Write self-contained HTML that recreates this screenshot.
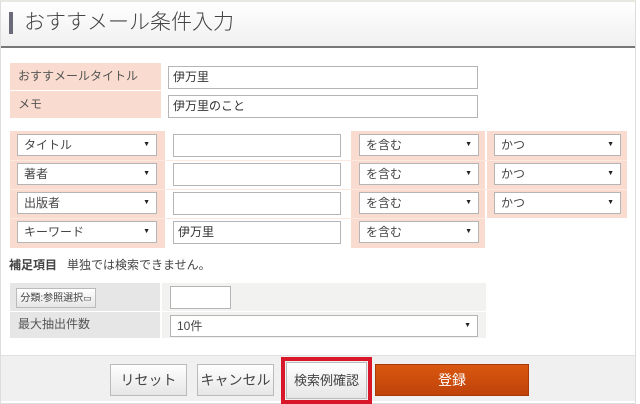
<!DOCTYPE html>
<html><head><meta charset="utf-8">
<style>
*{box-sizing:border-box;margin:0;padding:0}
body{width:640px;height:404px;overflow:hidden;background:#fff;font-family:"Liberation Sans","Noto Sans CJK JP",sans-serif;color:#333;position:relative}
.a{position:absolute}
.frame{left:0;top:0;width:636px;height:404px;border:1px solid #ddd;border-top:2px solid #e8e8e0;background:#fff}
.hdr{left:1px;top:2px;width:634px;height:46px;background:linear-gradient(#fff,#f0f0f0);border-bottom:2px solid #777}
.bar{left:9px;top:12px;width:4px;height:22px;background:#6a6a7a}
.ttl{left:24px;top:9px;font-size:21px;color:#444;line-height:28px;font-weight:300}
.pk{background:#f9dccf}
.lbl{font-size:12px;color:#555;line-height:27px;padding-left:8px}
.in{background:#fff;border:1px solid #b5b5b5;font-size:12px;line-height:20px;padding-left:4px;color:#333}
.sel{background:#fff;border:1px solid #b5b5b5;font-size:12px;line-height:20px;padding-left:6px;color:#444}
.sel:after{content:"▼";position:absolute;right:6px;top:0;font-size:7px;color:#222}
.gy{background:#e6e6e6}
.gv{background:#f2f2f0}
.btn{border:1px solid #bbb;background:linear-gradient(#fff,#e6e6e6);font-size:14px;text-align:center;line-height:30px;color:#444}
</style></head><body>
<div class="a frame"></div>
<div class="a hdr"></div>
<div class="a bar"></div>
<div class="a ttl">おすすメール条件入力</div>

<div class="a pk" style="left:10px;top:63px;width:151px;height:27px"></div>
<div class="a pk" style="left:10px;top:91px;width:151px;height:27px"></div>
<div class="a lbl" style="left:10px;top:63px">おすすメールタイトル</div>
<div class="a lbl" style="left:10px;top:91px">メモ</div>
<div class="a in" style="left:168px;top:66px;width:310px;height:23px">伊万里</div>
<div class="a in" style="left:168px;top:95px;width:310px;height:23px">伊万里のこと</div>

<div class="a pk" style="left:10px;top:131px;width:155px;height:117px"></div>
<div class="a pk" style="left:351px;top:131px;width:134px;height:117px"></div>
<div class="a pk" style="left:487px;top:131px;width:140px;height:87px"></div>
<div class="a" style="left:10px;top:160px;width:617px;height:1px;background:#fbe9e0"></div>
<div class="a" style="left:10px;top:189px;width:617px;height:1px;background:#fbe9e0"></div>
<div class="a" style="left:10px;top:218px;width:475px;height:1px;background:#fbe9e0"></div>

<div class="a sel" style="left:17px;top:134px;width:140px;height:22px">タイトル</div>
<div class="a sel" style="left:17px;top:163px;width:140px;height:22px">著者</div>
<div class="a sel" style="left:17px;top:192px;width:140px;height:22px">出版者</div>
<div class="a sel" style="left:17px;top:221px;width:140px;height:22px">キーワード</div>

<div class="a in" style="left:173px;top:134px;width:168px;height:23px"></div>
<div class="a in" style="left:173px;top:163px;width:168px;height:23px"></div>
<div class="a in" style="left:173px;top:192px;width:168px;height:23px"></div>
<div class="a in" style="left:173px;top:221px;width:168px;height:23px">伊万里</div>

<div class="a sel" style="left:359px;top:134px;width:120px;height:22px">を含む</div>
<div class="a sel" style="left:359px;top:163px;width:120px;height:22px">を含む</div>
<div class="a sel" style="left:359px;top:192px;width:120px;height:22px">を含む</div>
<div class="a sel" style="left:359px;top:221px;width:120px;height:22px">を含む</div>

<div class="a sel" style="left:494px;top:134px;width:127px;height:22px">かつ</div>
<div class="a sel" style="left:494px;top:163px;width:127px;height:22px">かつ</div>
<div class="a sel" style="left:494px;top:192px;width:127px;height:22px">かつ</div>

<div class="a" style="left:9px;top:257px;font-size:12px;line-height:16px;color:#444"><b style="font-weight:bold">補足項目</b>&nbsp;&nbsp;&nbsp;単独では検索できません。</div>

<div class="a gy" style="left:10px;top:283px;width:150px;height:55px"></div>
<div class="a gv" style="left:162px;top:283px;width:324px;height:55px"></div>
<div class="a" style="left:10px;top:311px;width:476px;height:1px;background:#fff"></div>
<div class="a btn" style="left:16px;top:288px;width:80px;height:20px;font-size:10px;line-height:18px">分類:参照選択<span style="font-size:9px">▭</span></div>
<div class="a in" style="left:170px;top:286px;width:61px;height:23px"></div>
<div class="a lbl" style="left:10px;top:311px">最大抽出件数</div>
<div class="a sel" style="left:170px;top:315px;width:308px;height:22px">10件</div>

<div class="a" style="left:1px;top:355px;width:634px;height:46px;background:#f0f0f0;border-top:1px solid #e0e0e0"></div>
<div class="a btn" style="left:110px;top:364px;width:77px;height:32px">リセット</div>
<div class="a btn" style="left:197px;top:364px;width:77px;height:32px">キャンセル</div>
<div class="a" style="left:281px;top:357px;width:91px;height:47px;border:4px solid #d8172a"></div>
<div class="a btn" style="left:286px;top:362px;width:81px;height:37px;line-height:35px;font-size:13px">検索例確認</div>
<div class="a" style="left:375px;top:364px;width:154px;height:32px;background:linear-gradient(#d9580f,#c0420a);border:1px solid #a83a08;color:#fff;font-size:14px;text-align:center;line-height:30px">登録</div>
</body></html>
